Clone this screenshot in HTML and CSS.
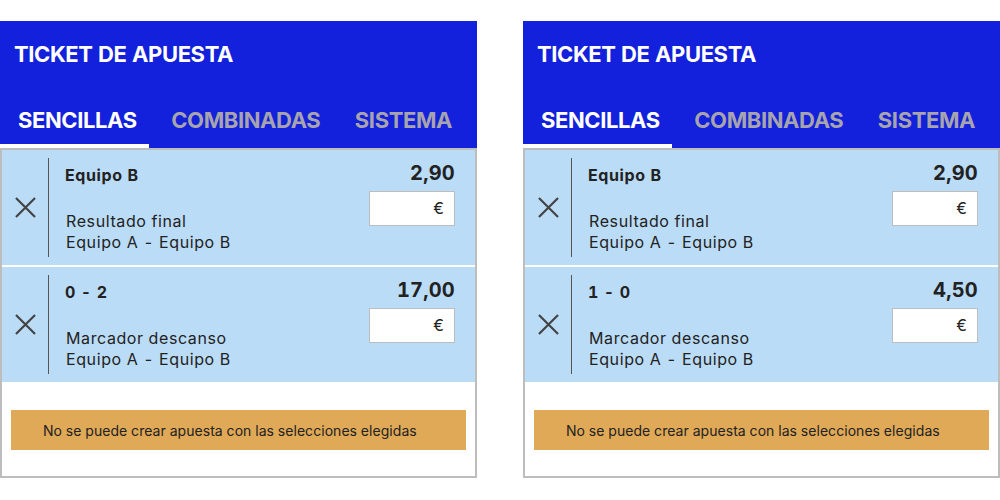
FILE: index.html
```html
<!DOCTYPE html>
<html lang="es">
<head>
<meta charset="utf-8">
<title>Ticket de apuesta</title>
<link rel="stylesheet" href="styles.css">
</head>
<body>
<div class="page">
  <section class="ticket">
    <header class="ticket-head">
      <h1 class="ticket-title">TICKET DE APUESTA</h1>
      <nav class="tabs">
        <span class="tab tab-active">SENCILLAS</span>
        <span class="tab">COMBINADAS</span>
        <span class="tab">SISTEMA</span>
      </nav>
    </header>
    <div class="ticket-body">
      <div class="bet">
        <div class="bet-remove"><svg class="x-icon" viewBox="0 0 22 22"><path d="M1 1L21 21M21 1L1 21"/></svg></div>
        <div class="bet-info">
          <div class="bet-pick">Equipo B</div>
          <div class="bet-market">Resultado final</div>
          <div class="bet-event">Equipo A - Equipo B</div>
        </div>
        <div class="bet-side">
          <div class="bet-odds">2,90</div>
          <div class="stake">€</div>
        </div>
      </div>
      <div class="bet">
        <div class="bet-remove"><svg class="x-icon" viewBox="0 0 22 22"><path d="M1 1L21 21M21 1L1 21"/></svg></div>
        <div class="bet-info">
          <div class="bet-pick">0 - 2</div>
          <div class="bet-market">Marcador descanso</div>
          <div class="bet-event">Equipo A - Equipo B</div>
        </div>
        <div class="bet-side">
          <div class="bet-odds">17,00</div>
          <div class="stake">€</div>
        </div>
      </div>
      <div class="warning">No se puede crear apuesta con las selecciones elegidas</div>
    </div>
  </section>

  <section class="ticket">
    <header class="ticket-head">
      <h1 class="ticket-title">TICKET DE APUESTA</h1>
      <nav class="tabs">
        <span class="tab tab-active">SENCILLAS</span>
        <span class="tab">COMBINADAS</span>
        <span class="tab">SISTEMA</span>
      </nav>
    </header>
    <div class="ticket-body">
      <div class="bet">
        <div class="bet-remove"><svg class="x-icon" viewBox="0 0 22 22"><path d="M1 1L21 21M21 1L1 21"/></svg></div>
        <div class="bet-info">
          <div class="bet-pick">Equipo B</div>
          <div class="bet-market">Resultado final</div>
          <div class="bet-event">Equipo A - Equipo B</div>
        </div>
        <div class="bet-side">
          <div class="bet-odds">2,90</div>
          <div class="stake">€</div>
        </div>
      </div>
      <div class="bet">
        <div class="bet-remove"><svg class="x-icon" viewBox="0 0 22 22"><path d="M1 1L21 21M21 1L1 21"/></svg></div>
        <div class="bet-info">
          <div class="bet-pick">1 - 0</div>
          <div class="bet-market">Marcador descanso</div>
          <div class="bet-event">Equipo A - Equipo B</div>
        </div>
        <div class="bet-side">
          <div class="bet-odds">4,50</div>
          <div class="stake">€</div>
        </div>
      </div>
      <div class="warning">No se puede crear apuesta con las selecciones elegidas</div>
    </div>
  </section>
</div>
</body>
</html>
```

FILE: styles.css
```css
* { box-sizing: border-box; }
html, body { margin: 0; padding: 0; background: #fff; }
body {
  font-family: Inter, "Noto Sans", sans-serif;
  color: #222;
  font-variant-numeric: tabular-nums;
}

.page {
  display: flex;
  gap: 46px;
  padding-top: 21px;
}

.ticket { width: 477px; flex: none; }

.ticket-head {
  background: #1320dc;
  padding: 20px 13px 0 0;
}
.ticket-title {
  margin: 0 0 40px 14px;
  font-size: 22px;
  line-height: 26px;
  font-weight: 700;
  color: #fff;
  letter-spacing: -0.4px;
}
.tabs {
  display: flex;
  justify-content: space-between;
}
.tab {
  font-size: 22px;
  line-height: 26px;
  font-weight: 700;
  color: #a7a4ad;
  padding: 0 12px 11px 18px;
  border-bottom: 4px solid transparent;
  letter-spacing: -0.4px;
}
.tab-active { color: #fff; border-bottom-color: #fff; }

.ticket-body {
  border: 2px solid #bdbdbd;
  background: #fff;
}

.bet {
  display: flex;
  height: 115px;
  background: #bbdcf7;
}
.bet + .bet { margin-top: 2px; }

.bet-remove {
  width: 47px;
  margin: 8px 0;
  border-right: 1px solid #555;
  display: flex;
  align-items: center;
  justify-content: center;
}
.x-icon { width: 21px; height: 21px; }
.x-icon path { stroke: #444; stroke-width: 2.3; fill: none; }

.bet-info {
  flex: 1;
  padding: 15px 0 0 16px;
}
.bet-pick {
  font-size: 16px;
  line-height: 20px;
  font-weight: 700;
  letter-spacing: 0.6px;
  margin-bottom: 26px;
}
.bet-market, .bet-event {
  font-size: 16px;
  line-height: 21px;
  letter-spacing: 0.6px;
  padding-left: 1px;
}

.bet-side {
  padding: 11px 20px 0 0;
  display: flex;
  flex-direction: column;
  align-items: flex-end;
}
.bet-odds {
  font-size: 20px;
  line-height: 24px;
  font-weight: 700;
  letter-spacing: 0.2px;
  margin-bottom: 6px;
}
.stake {
  width: 86px;
  height: 35px;
  background: #fff;
  border: 1px solid #bdbdbd;
  font-size: 16px;
  line-height: 33px;
  text-align: right;
  padding-right: 10px;
}

.warning {
  margin: 28px 9px 26px;
  height: 40px;
  background: #dfa957;
  display: flex;
  align-items: center;
  padding-left: 32px;
  font-size: 14px;
  color: #222;
  letter-spacing: 0.05px;
}
```
